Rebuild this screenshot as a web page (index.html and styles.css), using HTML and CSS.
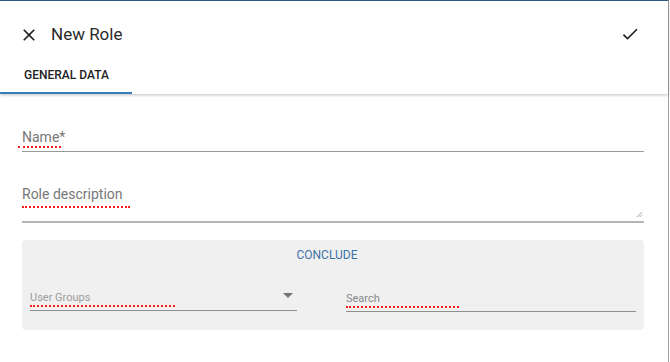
FILE: index.html
```html
<!DOCTYPE html>
<html lang="en">
<head>
<meta charset="UTF-8">
<title>New Role</title>
<link rel="stylesheet" href="styles.css">
</head>
<body>
    <div class="dialog">
        <div class="dialog-header">
            <div class="title-bar">
                <svg class="icon-close" viewBox="0 0 24 24"><path d="M19 6.41 17.59 5 12 10.59 6.41 5 5 6.41 10.59 12 5 17.59 6.41 19 12 13.41 17.59 19 19 17.59 13.41 12z"/></svg>
                <span class="title">New Role</span>
                <svg class="icon-check" viewBox="0 0 24 24"><path d="M9 16.17 4.83 12l-1.42 1.41L9 19 21 7l-1.41-1.41z"/></svg>
            </div>
            <div class="tabs">
                <div class="tab active">GENERAL DATA</div>
            </div>
        </div>

        <div class="form">
            <!-- Name -->
            <div class="field field-name">
                <span class="label">Name*</span>
                <span class="squiggle squiggle-name"></span>
            </div>

            <!-- Description -->
            <div class="field field-desc">
                <span class="label">Role description</span>
                <span class="squiggle squiggle-desc"></span>
                <svg class="resize-grip" viewBox="0 0 8 8"><path d="M7 1 1 7M7 4 4 7" stroke="#9a9a9a" stroke-width="1"/></svg>
            </div>

            <div class="panel">
                <div class="conclude">CONCLUDE</div>
                <div class="panel-row">
                    <div class="small-field select-field">
                        <span class="small-label">User Groups</span>
                        <span class="squiggle squiggle-groups"></span>
                        <span class="arrow"></span>
                    </div>
                    <div class="small-field search-field">
                        <span class="small-label">Search</span>
                        <span class="squiggle squiggle-search"></span>
                    </div>
                </div>
            </div>
        </div>
    </div>
</body>
</html>
```

FILE: styles.css
```css
html, body {
    margin: 0;
    padding: 0;
    background-color: white;
    font-family: Roboto, "Liberation Sans", sans-serif;
}

.dialog {
    width: 668px;
    height: 361px;
    border-top: 1px solid #2d5d88;
    border-right: 1px solid #a0a0a0;
    background: white;
}

.dialog-header {
    box-shadow: 0 1px 3px rgba(0, 0, 0, 0.25);
    position: relative;
}

.title-bar {
    height: 64px;
    box-sizing: border-box;
    padding: 2px 28px 0 19px;
    display: flex;
    align-items: center;
}

.icon-close {
    width: 20px;
    height: 20px;
    fill: #222;
    margin-top: 1px;
}

.title {
    margin-left: 12px;
    font-size: 17px;
    color: #2a2a2a;
    flex: 1;
}

.icon-check {
    width: 20px;
    height: 20px;
    fill: #222;
}

.tabs {
    display: flex;
    height: 29px;
}

.tab {
    width: 132px;
    box-sizing: border-box;
    padding: 3px 0 0 24px;
    font-size: 12px;
    font-weight: 500;
    color: #222;
}

.tab.active {
    border-bottom: 2px solid #3a7dbd;
}

.form {
    padding: 0 24px 0 22px;
}

.field {
    position: relative;
    border-bottom: 1px solid #9a9a9a;
}

.field-name {
    margin-top: 35px;
    height: 22px;
}

.field-desc {
    margin-top: 34px;
    height: 35px;
    border-bottom-color: #b5b5b5;
    border-bottom-width: 2px;
}

.label {
    display: block;
    font-size: 14px;
    color: #777;
    line-height: 16px;
}

.squiggle {
    position: absolute;
    left: 0;
    height: 0;
    border-bottom: 2px dotted #ff1a1a;
}

.squiggle-name {
    top: 17px;
    left: -4px;
    width: 43px;
}

.squiggle-desc {
    top: 20px;
    width: 108px;
}

.resize-grip {
    position: absolute;
    right: 1px;
    bottom: 3px;
    width: 7px;
    height: 7px;
}

.panel {
    margin-top: 17px;
    background: #f0f0f0;
    border-radius: 4px;
    height: 90px;
    padding: 0 8px;
}

.conclude {
    text-align: center;
    color: #3d72a4;
    font-size: 12px;
    padding: 8px 12px 0 0;
    height: 30px;
    box-sizing: border-box;
}

.panel-row {
    display: flex;
    gap: 48px;
    margin-top: 19px;
}

.small-field {
    position: relative;
    border-bottom: 1px solid #8f8f8f;
    height: 21px;
}

.select-field {
    width: 267px;
}

.search-field {
    flex: 1;
    height: 22px;
    margin-left: 1px;
}

.small-label {
    display: block;
    font-size: 11px;
    color: #9c9c9c;
    line-height: 13px;
    padding-top: 2px;
}

.search-field .small-label {
    color: #888;
    padding-top: 3px;
}

.squiggle-groups {
    top: 16px;
    width: 145px;
}

.squiggle-search {
    top: 17px;
    width: 113px;
}

.arrow {
    position: absolute;
    right: 4px;
    top: 4px;
    width: 0;
    height: 0;
    border-left: 5px solid transparent;
    border-right: 5px solid transparent;
    border-top: 5px solid #757575;
}
```
